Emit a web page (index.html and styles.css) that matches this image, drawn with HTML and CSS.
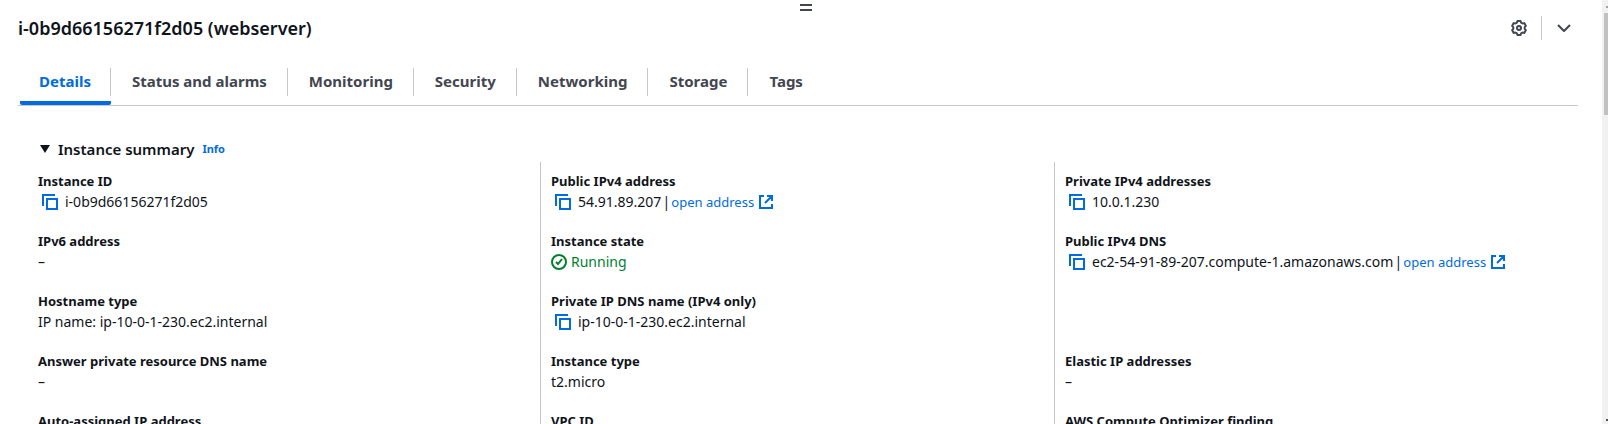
FILE: index.html
```html
<!DOCTYPE html>
<html lang="en">
<head>
<meta charset="utf-8">
<title>Instance details</title>
<link rel="stylesheet" href="styles.css">
</head>
<body>
<svg class="defs" aria-hidden="true">
  <symbol id="copy" viewBox="0 0 16 16"><path d="M1 12V1H13M5 5H15V15H5Z"/></symbol>
  <symbol id="external" viewBox="0 0 16 16"><path d="M6 2H2V14H14V10M9 2H14V7M14 2L7 9"/></symbol>
  <symbol id="gear" viewBox="-8 -8 16 16"><path d="M-1.6-7H1.6L2.1-5.4L3.6-4.5L5.3-4.9L6.9-2.1L5.7-.9V.9L6.9 2.1L5.3 4.9L3.6 4.5L2.1 5.4L1.6 7H-1.6L-2.1 5.4L-3.6 4.5L-5.3 4.9L-6.9 2.1L-5.7.9V-.9L-6.9-2.1L-5.3-4.9L-3.6-4.5L-2.1-5.4Z"/><circle r="2"/></symbol>
  <symbol id="chevron" viewBox="0 0 16 16"><path d="M2 5L8 11L14 5"/></symbol>
  <symbol id="check" viewBox="0 0 16 16"><circle cx="8" cy="8" r="7"/><path d="M5 8L7 10L11 5"/></symbol>
</svg>
<div class="panel">
  <main class="content">
    <button class="grip" aria-label="Resize panel"></button>
    <header class="header">
      <h1 class="title">i-0b9d66156271f2d05 (webserver)</h1>
      <div class="actions">
        <button class="icon-button" aria-label="Settings"><svg class="icon"><use href="#gear"/></svg></button>
        <span class="divider"></span>
        <button class="icon-button" aria-label="Collapse panel"><svg class="icon"><use href="#chevron"/></svg></button>
      </div>
    </header>
    <nav class="tabs" role="tablist">
      <button class="tab active" role="tab" aria-selected="true"><span class="tab-label">Details</span></button>
      <button class="tab" role="tab"><span class="tab-label">Status and alarms</span></button>
      <button class="tab" role="tab"><span class="tab-label">Monitoring</span></button>
      <button class="tab" role="tab"><span class="tab-label">Security</span></button>
      <button class="tab" role="tab"><span class="tab-label">Networking</span></button>
      <button class="tab" role="tab"><span class="tab-label">Storage</span></button>
      <button class="tab" role="tab"><span class="tab-label">Tags</span></button>
    </nav>
    <section class="summary">
      <div class="summary-head">
        <button class="expander"><span class="caret"></span>Instance summary</button>
        <a class="info" href="#">Info</a>
      </div>
      <div class="columns">
        <dl class="column">
          <div class="field"><dt>Instance ID</dt><dd><button class="copy" aria-label="Copy instance ID"><svg class="icon"><use href="#copy"/></svg></button>i-0b9d66156271f2d05</dd></div>
          <div class="field"><dt>IPv6 address</dt><dd>–</dd></div>
          <div class="field"><dt>Hostname type</dt><dd>IP name: ip-10-0-1-230.ec2.internal</dd></div>
          <div class="field"><dt>Answer private resource DNS name</dt><dd>–</dd></div>
          <div class="field"><dt>Auto-assigned IP address</dt></div>
        </dl>
        <dl class="column">
          <div class="field"><dt>Public IPv4 address</dt><dd><button class="copy" aria-label="Copy public IPv4 address"><svg class="icon"><use href="#copy"/></svg></button>54.91.89.207<span class="bar">|</span><a class="link" href="#">open address<svg class="icon"><use href="#external"/></svg></a></dd></div>
          <div class="field"><dt>Instance state</dt><dd><span class="state"><svg class="icon"><use href="#check"/></svg>Running</span></dd></div>
          <div class="field"><dt>Private IP DNS name (IPv4 only)</dt><dd><button class="copy" aria-label="Copy private DNS name"><svg class="icon"><use href="#copy"/></svg></button>ip-10-0-1-230.ec2.internal</dd></div>
          <div class="field"><dt>Instance type</dt><dd>t2.micro</dd></div>
          <div class="field"><dt>VPC ID</dt></div>
        </dl>
        <dl class="column">
          <div class="field"><dt>Private IPv4 addresses</dt><dd><button class="copy" aria-label="Copy private IPv4 address"><svg class="icon"><use href="#copy"/></svg></button>10.0.1.230</dd></div>
          <div class="field"><dt>Public IPv4 DNS</dt><dd><button class="copy" aria-label="Copy public DNS name"><svg class="icon"><use href="#copy"/></svg></button>ec2-54-91-89-207.compute-1.amazonaws.com<span class="bar">|</span><a class="link" href="#">open address<svg class="icon"><use href="#external"/></svg></a></dd></div>
          <div class="field"></div>
          <div class="field"><dt>Elastic IP addresses</dt><dd>–</dd></div>
          <div class="field"><dt>AWS Compute Optimizer finding</dt></div>
        </dl>
      </div>
    </section>
  </main>
  <div class="scrollbar" aria-hidden="true"><span class="arrow up"></span><span class="thumb"></span><span class="arrow down"></span></div>
</div>
</body>
</html>
```
FILE: styles.css
```css
* { box-sizing: border-box; }
body {
  margin: 0;
  background: #fff;
  color: #0f141a;
  font: 14px/20px "Noto Sans", "Open Sans", sans-serif;
}
button {
  margin: 0;
  padding: 0;
  border: 0;
  background: none;
  color: inherit;
  font: inherit;
  cursor: pointer;
}
a { color: #006ce0; text-decoration: none; }
.defs { display: none; }
.icon {
  flex: none;
  display: block;
  width: 16px;
  height: 16px;
  fill: none;
  stroke: currentColor;
  stroke-width: 2;
}
.panel { display: flex; height: 100vh; overflow: hidden; }
.content { flex: 1; min-width: 0; display: flex; flex-direction: column; }
.grip {
  flex: none;
  align-self: center;
  width: 12px;
  height: 7px;
  margin: 4px 0 0 10px;
  border: solid #424650;
  border-width: 2px 0;
}
.header {
  flex: none;
  display: flex;
  align-items: center;
  justify-content: space-between;
  height: 34px;
  padding: 0 30px 0 18px;
}
.title { margin: 0; font-size: 18px; line-height: 24px; font-weight: 600; }
.actions { display: flex; align-items: center; gap: 14px; color: #424650; }
.icon-button .icon { stroke-linejoin: round; }
.divider { width: 1px; height: 24px; background: #c6c6cd; }
.tabs {
  flex: none;
  display: flex;
  height: 61px;
  margin: 0 24px 0 18px;
  padding: 23px 0 0 2px;
  border-bottom: 1px solid #c6c6cd;
}
.tab {
  border-bottom: 4px solid transparent;
  color: #424650;
  font-size: 15px;
  font-weight: 700;
  line-height: 26px;
}
.tab-label { display: block; height: 28px; margin-bottom: 5px; padding: 0 20px 0 21px; border-right: 1px solid #c6c6cd; }
.tab:first-child .tab-label { padding: 0 19px; }
.tab:last-child .tab-label { border-right: 0; }
.tab.active { color: #006ce0; border-bottom-color: #006ce0; border-radius: 2px; }
.summary { padding: 31px 34px 0 26px; }
.summary-head { display: flex; align-items: baseline; gap: 8px; height: 25px; padding-left: 14px; }
.expander { display: flex; align-items: center; gap: 8px; font-size: 15px; line-height: 24px; font-weight: 600; }
.caret { border: solid transparent; border-width: 8px 5px 0; border-top-color: #0f141a; }
.info { font-size: 11px; font-weight: 700; }
.columns { display: grid; grid-template-columns: repeat(3, 1fr); }
.column { margin: 0; padding: 9px 0 0 10px; border-left: 1px solid #c6c6cd; }
.column:first-child { padding-left: 11px; border-left-color: transparent; }
.field { height: 60px; white-space: nowrap; }
dt { font-size: 13px; font-weight: 700; }
dd { display: flex; align-items: center; margin: 0; padding-top: 1px; }
.copy { margin: 0 7px 0 4px; color: #006ce0; }
.bar { width: 10px; text-align: center; }
.link { display: flex; align-items: center; gap: 4px; font-size: 13px; }
.state { display: flex; align-items: center; gap: 4px; color: #00802f; }
.scrollbar {
  flex: none;
  display: flex;
  flex-direction: column;
  align-items: flex-end;
  width: 6px;
  padding: 6px 0 3px;
  background: #f1f1f1;
}
.thumb { width: 4px; height: 102px; margin-top: 5px; background: #c1c1c1; }
.arrow { width: 2px; height: 2px; background: #a3a3a3; }
.down { margin-top: auto; background: #505050; }
```
